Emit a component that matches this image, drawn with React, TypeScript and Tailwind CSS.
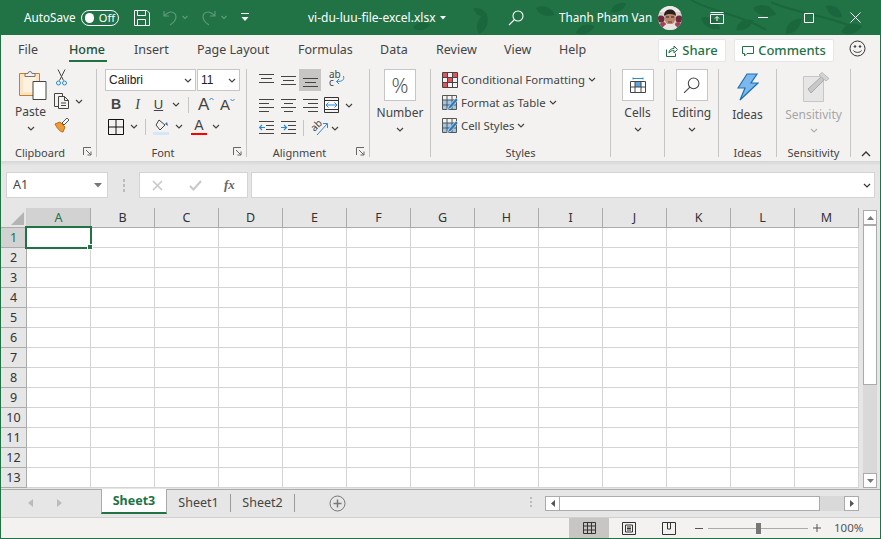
import type { ReactNode } from 'react';

const FONT = "font-['Noto_Sans','Open_Sans',sans-serif]";

const Chev = ({ color = '#444' }: { color?: string }) => (
  <svg width="8" height="5" viewBox="0 0 8 5" fill="none" stroke={color} strokeWidth="1.2">
    <path d="M1 1l3 3 3-3" />
  </svg>
);

const Leaf = ({ x, y, r, s = 1 }: { x: number; y: number; r: number; s?: number }) => (
  <path transform={`translate(${x} ${y}) rotate(${r}) scale(${s})`} d="M0 0C6-7 15-7 22 0 15 6 6 6 0 0z" />
);

const TitleLeaves = () => (
  <svg className="pointer-events-none absolute inset-0" width="881" height="35" fill="#1b673d">
    <Leaf x={412} y={28} r={-10} s={0.8} />
    <Leaf x={478} y={34} r={-70} />
    <Leaf x={486} y={16} r={-150} s={0.7} />
    <Leaf x={535} y={8} r={20} s={0.9} />
    <Leaf x={575} y={33} r={-20} s={0.9} />
    <Leaf x={610} y={12} r={-30} s={0.8} />
    <Leaf x={700} y={18} r={30} s={1} />
    <Leaf x={735} y={30} r={-30} s={0.9} />
    <Leaf x={752} y={8} r={15} s={1.1} />
    <Leaf x={785} y={34} r={-45} s={1} />
    <Leaf x={825} y={6} r={35} s={0.9} />
    <Leaf x={840} y={32} r={-15} s={1} />
    <path d="M690 0c20 12 50 14 75 30M770 2c20 10 50 12 80 24" stroke="#1b673d" strokeWidth="2" fill="none" />
  </svg>
);

const Avatar = () => (
  <svg width="24" height="24" viewBox="0 0 24 24">
    <clipPath id="av"><circle cx="12" cy="12" r="12" /></clipPath>
    <g clipPath="url(#av)">
      <rect width="24" height="24" fill="#d9d2cf" />
      <rect y="0" width="24" height="6" fill="#efeaea" />
      <circle cx="3" cy="13" r="3.5" fill="#6d2a3c" />
      <circle cx="21" cy="13" r="3.5" fill="#6d2a3c" />
      <circle cx="5" cy="19" r="3" fill="#a5405a" />
      <circle cx="20" cy="19" r="3" fill="#a5405a" />
      <ellipse cx="12" cy="12" rx="5.5" ry="6.5" fill="#b98468" />
      <path d="M6 10c0-5 3-6.5 6-6.5s6 1.5 6 6.5c-2-2.500-9-3-12 0z" fill="#2a211f" />
      <path d="M8 11h3M13 11h3" stroke="#2a211f" strokeWidth="1.2" />
      <path d="M10 16h4" stroke="#6b3b32" strokeWidth="1" />
      <path d="M4 24c1-5 4-6 8-6s7 1 8 6z" fill="#e9e4e2" />
    </g>
  </svg>
);

const TitleBar = () => (
  <div className="relative flex h-[35px] shrink-0 items-center bg-[#217346] text-[11.7px] text-white">
    <TitleLeaves />
    <span className="relative ml-[23px] w-[57px]">AutoSave</span>
    <div className="relative flex h-[16px] w-[38px] items-center rounded-full border border-white px-[3px]">
      <span className="h-[10px] w-[10px] rounded-full bg-white" />
      <span className="ml-[5px] text-[11px] leading-none">Off</span>
    </div>
    <svg className="relative ml-[15px]" width="16" height="16" viewBox="0 0 16 16" fill="none" stroke="#fff">
      <path d="M.5.5h12.500l2.500 2.500v12.500H.5zM3.500.5v5h8v-5M3.500 15.500v-6h8v6" />
    </svg>
    <svg className="relative ml-[12px]" width="32" height="16" viewBox="0 0 32 16" fill="none" stroke="#5f9c7d" strokeWidth="1.100">
      <path d="M2 1v5h5M2 6c3-3 5-4 7-4 3 0 5 2 5 5 0 4-3 6-6 8" />
      <path d="M20.500 6l2.500 2.500L25.500 6" />
    </svg>
    <svg className="relative ml-[7px]" width="32" height="16" viewBox="0 0 32 16" fill="none" stroke="#5f9c7d" strokeWidth="1.100">
      <path d="M14 1v5H9M14 6c-3-3-5-4-7-4-3 0-5 2-5 5 0 4 3 6 6 8" />
      <path d="M20.500 6l2.500 2.500L25.500 6" />
    </svg>
    <svg className="relative ml-[7px]" width="10" height="9" viewBox="0 0 10 9" fill="#fff">
      <rect x="1" y="0" width="8" height="1" />
      <path d="M1.500 4h7L5 8z" />
    </svg>
    <span className="relative ml-[58px] w-[132px] text-[12px] whitespace-nowrap">vi-du-luu-file-excel.xlsx</span>
    <svg className="relative ml-[0px]" width="6" height="4" viewBox="0 0 6 4" fill="#fff"><path d="M0 0h6L3 3.500z" /></svg>
    <svg className="relative ml-[62px]" width="16" height="16" viewBox="0 0 16 16" fill="none" stroke="#fff" strokeWidth="1.100">
      <circle cx="10" cy="6" r="5" />
      <path d="M6.500 9.500L1 15" />
    </svg>
    <span className="relative ml-[35px] w-[99px] whitespace-nowrap">Thanh Pham Van</span>
    <div className="relative h-[24px] w-[24px]"><Avatar /></div>
    <svg className="relative ml-[28px]" width="14" height="12" viewBox="0 0 14 12" fill="none" stroke="#fff">
      <path d="M.5 2.500h13v9H.5zM.5 .5h13M7 9V5M5 6.500L7 4.500l2 2" />
    </svg>
    <svg className="relative ml-[34px]" width="10" height="2" viewBox="0 0 10 2"><rect width="10" height="1" y="0" fill="#fff" /></svg>
    <svg className="relative ml-[36px]" width="10" height="10" viewBox="0 0 10 10" fill="none" stroke="#fff"><path d="M.5.500h9v9h-9z" /></svg>
    <svg className="relative ml-[36px]" width="11" height="11" viewBox="0 0 11 11" fill="none" stroke="#fff"><path d="M.5.500l10 10M10.500.500l-10 10" /></svg>
  </div>
);

const tabs = [
  { label: 'File', cls: 'w-[51px]' },
  { label: 'Home', cls: 'w-[65px]' },
  { label: 'Insert', cls: 'w-[63px]' },
  { label: 'Page Layout', cls: 'w-[101px]' },
  { label: 'Formulas', cls: 'w-[82px]' },
  { label: 'Data', cls: 'w-[56px]' },
  { label: 'Review', cls: 'w-[68px]' },
  { label: 'View', cls: 'w-[55px]' },
  { label: 'Help', cls: 'w-[55px]' },
];

const TabRow = () => (
  <div className="flex h-[30px] shrink-0 items-start pl-[17px] text-[12.5px] text-[#444]">
    {tabs.map((t) => (
      <div key={t.label} className={`${t.cls} relative h-[28px] pt-[6px] whitespace-nowrap`}>
        {t.label === 'Home' ? (
          <>
            <span className="font-medium text-[#1f4f35]">{t.label}</span>
            <div className="absolute top-[25px] left-0 h-[2px] w-[38px] bg-[#217346]" />
          </>
        ) : (
          t.label
        )}
      </div>
    ))}
    <div className="ml-[44px] mt-[4px] flex h-[23px] w-[68px] items-center justify-center gap-[4px] rounded-[2px] border border-[#e6e6e6] bg-white text-[13px] font-medium text-[#217346]">
      <svg width="12" height="12" viewBox="0 0 12 12" fill="none" stroke="#217346">
        <path d="M.5 4.500v7h9v-3M3 8c0-3 2-4.500 5-4.500V1l3.500 3.500L8 8V5.500C6 5.500 4 6 3 8z" />
      </svg>
      Share
    </div>
    <div className="ml-[8px] mt-[4px] flex h-[23px] w-[100px] items-center justify-center gap-[4px] rounded-[2px] border border-[#e6e6e6] bg-white text-[13px] font-medium text-[#217346]">
      <svg width="12" height="12" viewBox="0 0 12 12" fill="none" stroke="#217346">
        <path d="M.5 1.500h11v7H5L2.500 11V8.500h-2z" />
      </svg>
      Comments
    </div>
    <svg className="ml-[15px] mt-[5px]" width="17" height="17" viewBox="0 0 17 17" fill="none" stroke="#333">
      <circle cx="8.500" cy="8.500" r="7.500" />
      <circle cx="6" cy="6.500" r=".8" fill="#333" />
      <circle cx="11" cy="6.500" r=".8" fill="#333" />
      <path d="M4.500 10.500c1.500 2.500 6.500 2.500 8 0" />
    </svg>
  </div>
);

const Group = ({ label, cls, launcher, children }: { label: string; cls: string; launcher?: boolean; children: ReactNode }) => (
  <div className={`${cls} relative mt-[4px] flex h-[88px] shrink-0 flex-col border-r border-[#c6c6c6]`}>
    <div className="relative h-[76px] flex-none">{children}</div>
    <div className={launcher ? 'pr-[17px] text-center text-[11px] leading-[16px] text-[#444]' : 'text-center text-[11px] leading-[16px] text-[#444]'}>{label}</div>
    {launcher && (
      <svg className="absolute right-[4px] bottom-[1px]" width="9" height="9" viewBox="0 0 9 9" fill="none" stroke="#666">
        <path d="M.5 8V.5H8M3 3l5 5M8 4.500V8H4.500" />
      </svg>
    )}
  </div>
);

// big ribbon button with a white box: Number, Cells, Editing
const BoxButton = ({ label, children }: { label: string; children: ReactNode }) => (
  <div className="flex flex-col items-center text-[12px] leading-[16px] text-[#444]">
    <div className="flex h-[32px] w-[32px] items-center justify-center border border-[#c6c6c6] bg-white">{children}</div>
    <span className="mt-[4px]">{label}</span>
    <div className="mt-[6px]"><Chev /></div>
  </div>
);

const Lines = ({ rows }: { rows: [number, number, number][] }) => (
  <svg width="15" height="14" viewBox="0 0 15 14" stroke="#444">
    {rows.map(([x1, x2, y]) => (
      <line key={y} x1={x1} x2={x2} y1={y + 0.5} y2={y + 0.5} />
    ))}
  </svg>
);

const Cell = ({ children, cls = '' }: { children: ReactNode; cls?: string }) => (
  <div className={`${cls} flex h-[22px] w-[22px] items-center justify-center`}>{children}</div>
);

const VSep = ({ cls }: { cls: string }) => <div className={`${cls} h-[16px] w-px bg-[#c6c6c6]`} />;

const Clipboard = () => (
  <Group label="Clipboard" cls="w-[96px]" launcher>
    <div className="flex">
      <div className="ml-[13px] flex w-[35px] flex-col items-center text-[12px] leading-[16px] text-[#444]">
        <svg width="28" height="32" viewBox="0 0 28 32" className="mt-[0px] ml-[2px]">
          <path d="M.5 4.500h20v22H.5z" fill="#fbe5c6" stroke="#d27d1d" />
          <path d="M4 8h13v15H4z" fill="#fdf1df" stroke="none" />
          <path d="M6 4.500h3a2 2 0 014 0h3v3H6z" fill="#f3f2f1" stroke="#777" />
          <path d="M14 12.500h13v18H14z" fill="#fff" stroke="#444" />
        </svg>
        <span className="mt-[3px] mr-[2px]">Paste</span>
        <div className="mt-[6px] mr-[2px]"><Chev /></div>
      </div>
      <div className="ml-[5px] flex flex-col items-start">
        <svg className="ml-[2px]" width="11" height="17" viewBox="0 0 11 17" fill="none" stroke="#444">
          <path d="M2 .5l5.500 11M9 .5L3.500 11.500" />
          <circle cx="2.500" cy="14" r="2" stroke="#2b88d8" />
          <circle cx="8.500" cy="14" r="2" stroke="#2b88d8" />
        </svg>
        <div className="mt-[7px] flex items-center gap-[5px]">
          <svg width="16" height="16" viewBox="0 0 16 16" fill="none" stroke="#444">
            <path d="M4.500 13.500H.5V.5h8v3M4.500 3.500h6l4 4v8h-10zM10.500 3.500v4h4M7 10h5M7 12.500h5" />
          </svg>
          <Chev />
        </div>
        <svg className="mt-[8px]" width="16" height="16" viewBox="0 0 16 16">
          <path d="M1 7l5-2 5 5-2 5c-3 0-6-4-8-8z" fill="#ed9a3a" stroke="#c46a10" />
          <path d="M8 6l5-5 2 2-5 5z" fill="#fff" stroke="#555" />
        </svg>
      </div>
    </div>
  </Group>
);

const Font = () => (
  <Group label="Font" cls="w-[150px]" launcher>
    <div className="ml-[8px] flex text-[12px] text-[#222]">
      <div className="flex h-[22px] w-[91px] items-center justify-between border border-[#c6c6c6] bg-white pr-[3px] pl-[3px] font-['Liberation_Sans',sans-serif]">
        Calibri <Chev />
      </div>
      <div className="ml-px flex h-[22px] w-[43px] items-center justify-between border border-[#c6c6c6] bg-white pr-[3px] pl-[3px] font-['Liberation_Sans',sans-serif]">
        11 <Chev />
      </div>
    </div>
    <div className="mt-[5px] ml-[8px] flex h-[17px] items-center text-[#444]">
      <span className="w-[22px] text-center font-['Liberation_Sans',sans-serif] text-[14px] font-bold">B</span>
      <span className="w-[21px] text-center font-['Liberation_Serif',serif] text-[14px] italic">I</span>
      <span className="w-[21px] text-center font-['Liberation_Sans',sans-serif] text-[13px] underline">U</span>
      <div className="ml-[3px] w-[13px]"><Chev /></div>
      <VSep cls="ml-[3px]" />
      <div className="ml-[9px] flex w-[22px] items-start font-['Liberation_Sans',sans-serif] text-[17px] leading-none">
        A
        <svg className="mt-[1px]" width="5" height="4" viewBox="0 0 5 4" fill="none" stroke="#2b88d8"><path d="M.5 3l2-2 2 2" /></svg>
      </div>
      <div className="flex w-[20px] items-start font-['Liberation_Sans',sans-serif] text-[15px] leading-none">
        A
        <svg className="mt-[1px]" width="5" height="4" viewBox="0 0 5 4" fill="none" stroke="#2b88d8"><path d="M.5 1l2 2 2-2" /></svg>
      </div>
    </div>
    <div className="mt-[5px] ml-[11px] flex h-[17px] items-center">
      <svg width="16" height="16" viewBox="0 0 16 16" fill="none" stroke="#111"><path d="M.5.500h15v15H.5zM8 .5v15M.5 8h15" /></svg>
      <div className="ml-[6px] w-[12px]"><Chev /></div>
      <VSep cls="ml-[3px]" />
      <svg className="ml-[7px]" width="17" height="16" viewBox="0 0 17 16">
        <path d="M6 1l6 5-5 5-4-5z" fill="none" stroke="#444" />
        <path d="M12 5l2-2 1 4z" fill="#2b6cb0" />
        <rect y="13" width="16" height="3" fill="#d5e6f5" />
      </svg>
      <div className="ml-[5px] w-[12px]"><Chev /></div>
      <div className="ml-[4px] flex h-[16px] w-[16px] flex-col items-center justify-end">
        <span className="font-['Liberation_Sans',sans-serif] text-[14px] leading-[13px] text-[#444]">A</span>
        <div className="mt-px h-[3px] w-full bg-[#f00]" />
      </div>
      <div className="ml-[5px] w-[12px]"><Chev /></div>
    </div>
  </Group>
);

const Alignment = () => (
  <Group label="Alignment" cls="w-[123px]" launcher>
    <div className="ml-[8px] flex flex-col">
      <div className="flex">
        <Cell><Lines rows={[[0, 15, 1], [2, 13, 5], [0, 15, 9]]} /></Cell>
        <Cell><Lines rows={[[0, 15, 3], [2, 13, 7], [0, 15, 11]]} /></Cell>
        <Cell cls="bg-[#c8c6c4]"><Lines rows={[[0, 15, 5], [2, 13, 9], [0, 15, 13]]} /></Cell>
        <div className="relative flex h-[22px] w-[30px] items-start pt-[1px] pl-[8px] text-[10px] leading-[8px] text-[#444]">
          <span className="w-[14px]">ab c</span>
          <svg className="absolute top-[7px] left-[13px]" width="11" height="11" viewBox="0 0 11 11" fill="none" stroke="#2b88d8">
            <path d="M9.500 0c1 4-1 5.500-7 5.500M5 3L2.500 5.500 5 8" />
          </svg>
        </div>
      </div>
      <div className="mt-[3px] flex h-[22px] items-center">
        <Cell><Lines rows={[[0, 15, 1], [0, 10, 5], [0, 15, 9], [0, 10, 13]]} /></Cell>
        <Cell><Lines rows={[[0, 15, 1], [3, 12, 5], [0, 15, 9], [3, 12, 13]]} /></Cell>
        <Cell><Lines rows={[[0, 15, 1], [5, 15, 5], [0, 15, 9], [5, 15, 13]]} /></Cell>
        <svg className="ml-[3px]" width="15" height="16" viewBox="0 0 15 16" fill="none">
          <path d="M.5.500h14v15H.5zM.5 3.500h14M.5 12.500h14" stroke="#333" />
          <rect x="1" y="4" width="13" height="8" fill="#fff" />
          <path d="M2 8h11M4.500 5.500L2 8l2.500 2.500M10.500 5.500L13 8l-2.500 2.500" stroke="#2b88d8" />
        </svg>
        <div className="ml-[6px]"><Chev /></div>
      </div>
      <div className="mt-[1px] flex h-[22px] items-center">
        <Cell><svg width="15" height="14" viewBox="0 0 15 14" fill="none"><path d="M0 .5h15M7 4.500h8M7 8.500h8M0 12.500h15" stroke="#444" /><path d="M6 6.500H.5M3 4l-2.500 2.500L3 9" stroke="#2b88d8" strokeWidth="1.200" /></svg></Cell>
        <Cell><svg width="15" height="14" viewBox="0 0 15 14" fill="none"><path d="M0 .5h15M7 4.500h8M7 8.500h8M0 12.500h15" stroke="#444" /><path d="M0 6.500h5.500M3 4l2.500 2.500L3 9" stroke="#2b88d8" strokeWidth="1.200" /></svg></Cell>
        <VSep cls="ml-[4px]" />
        <div className="relative ml-[7px] h-[16px] w-[17px]">
          <span className="absolute top-[-1px] left-[-1px] -rotate-45 text-[10px] leading-[12px] text-[#444]">ab</span>
          <svg className="absolute inset-0" width="17" height="16" viewBox="0 0 17 16" fill="none">
            <path d="M6 15L16 4M12 3.500h4.500V8" stroke="#2b88d8" />
          </svg>
        </div>
        <div className="ml-[3px]"><Chev /></div>
      </div>
    </div>
  </Group>
);

const StyleRow = ({ label, icon }: { label: string; icon: ReactNode }) => (
  <div className="flex h-[23px] items-center gap-[3px] whitespace-nowrap text-[11.400px] text-[#444]">
    {icon}
    <span>{label}</span>
    <Chev />
  </div>
);

const tableIcon = (
  <svg width="16" height="16" viewBox="0 0 16 16" fill="none">
    <path d="M1 1h14v3H1z" fill="#f3f2f1" />
    <path d="M1 5h13v9H1z" fill="#9cc8ee" />
    <path d="M.5.500h14v14H.5zM.5 5h14M5 .5v14M10 .5v14M.5 10h14" stroke="#555" />
    <path d="M5 15l2-4 7-8 2 2-7 8z" fill="#2f78b8" stroke="#fff" strokeWidth=".5" />
  </svg>
);

const Styles = () => (
  <Group label="Styles" cls="w-[180px]">
    <div className="ml-[11px] mt-[-1px] flex flex-col">
      <StyleRow
        label="Conditional Formatting"
        icon={
          <svg width="16" height="16" viewBox="0 0 16 16" fill="none">
            <path d="M1 1h5v5H1zM10 1h5v5h-5zM1 10h5v5H1zM6 6h4v4H6z" fill="#e8505b" />
            <path d="M.5.500h15v15H.5zM5.500.500v15M10.500.500v15M.5 5.500h15M.5 10.500h15" stroke="#444" />
          </svg>
        }
      />
      <StyleRow label="Format as Table" icon={tableIcon} />
      <StyleRow label="Cell Styles" icon={tableIcon} />
    </div>
  </Group>
);

const Ribbon = () => (
  <div className={`flex h-[96px] shrink-0`}>
    <Clipboard />
    <Font />
    <Alignment />
    <Group label="" cls="w-[61px]">
      <div className="flex justify-center">
        <BoxButton label="Number"><span className="font-['Open_Sans',sans-serif] text-[21px] leading-none font-light text-[#444]">%</span></BoxButton>
      </div>
    </Group>
    <Styles />
    <Group label="" cls="w-[54px]">
      <div className="flex justify-center">
        <BoxButton label="Cells">
          <svg width="16" height="16" viewBox="0 0 16 16" fill="none">
            <rect x="5" y="5" width="6" height="5" fill="#5ba4e0" />
            <path d="M.5 4.500h15v11H.5zM.5 10h15M5 4.500v11M11 4.500v11" stroke="#444" />
            <path d="M3 1.500h10M3 .5v2M13 .5v2" stroke="#2b88d8" />
          </svg>
        </BoxButton>
      </div>
    </Group>
    <Group label="" cls="w-[54px]">
      <div className="flex justify-center">
        <BoxButton label="Editing">
          <svg width="17" height="17" viewBox="0 0 16 16" fill="none" stroke="#444">
            <circle cx="10" cy="6" r="5" />
            <path d="M6.500 9.500L1 15" />
          </svg>
        </BoxButton>
      </div>
    </Group>
    <Group label="Ideas" cls="w-[58px]">
      <div className="flex flex-col items-center pt-[4px] text-[12px] leading-[16px] text-[#444]">
        <svg width="22" height="28" viewBox="0 0 22 28">
          <path d="M10 1h10l-6 9h7L3 27l5-12H1z" fill="#7cb8ec" stroke="#1f6fb5" strokeWidth="1.200" />
        </svg>
        <span className="mt-[6px]">Ideas</span>
      </div>
    </Group>
    <Group label="Sensitivity" cls="w-[74px]">
      <div className="flex flex-col items-center pt-[3px] text-[12px] leading-[16px] text-[#a6a6a6]">
        <svg className="ml-[6px]" width="27" height="30" viewBox="0 0 27 30" fill="none">
          <path d="M.5 4.500h20v25H.5z" fill="#e6e6e6" stroke="#c6c6c6" />
          <path d="M5 17L18 5l3 3L8 21z" fill="#c8c8c8" stroke="#aaa" />
          <path d="M16 3l3-2.500 7 6L23 9z" fill="#d4d4d4" stroke="#bbb" />
        </svg>
        <span className="mt-[5px]">Sensitivity</span>
        <div className="mt-[5px]"><Chev color="#b0b0b0" /></div>
      </div>
    </Group>
    <svg className="ml-[10px] mt-[85px] shrink-0" width="10" height="7" viewBox="0 0 10 7" fill="none" stroke="#333" strokeWidth="1.300">
      <path d="M1 6l4-4 4 4" />
    </svg>
  </div>
);

const FormulaBar = () => (
  <div className="flex h-[47px] shrink-0 items-start bg-[#e6e6e6] bg-gradient-to-b from-[#d6d6d6] from-0% to-[#e6e6e6] to-10% pt-[11px] pl-[5px]">
    <div className="flex h-[26px] w-[102px] items-center justify-between border border-[#d4d4d4] bg-white pr-[5px] pl-[6px] text-[12.500px] text-[#444]">
      A1
      <svg width="8" height="5" viewBox="0 0 8 5" fill="#777"><path d="M0 0h8L4 4.500z" /></svg>
    </div>
    <div className="ml-[15px] mt-[7px] flex flex-col gap-[2px]">
      <div className="h-[3px] w-[2px] bg-[#bbb]" />
      <div className="h-[3px] w-[2px] bg-[#bbb]" />
      <div className="h-[3px] w-[2px] bg-[#bbb]" />
    </div>
    <div className="ml-[14px] flex h-[26px] w-[109px] items-center border border-[#d4d4d4] bg-white text-[#666]">
      <svg className="ml-[12px]" width="11" height="11" viewBox="0 0 11 11" fill="none" stroke="#c8c8c8" strokeWidth="1.600"><path d="M1 1l9 9M10 1l-9 9" /></svg>
      <svg className="ml-[26px]" width="13" height="11" viewBox="0 0 13 11" fill="none" stroke="#c8c8c8" strokeWidth="2"><path d="M1 6l3.500 3.500L12 1" /></svg>
      <span className="ml-[22px] font-['Liberation_Serif',serif] text-[13px] font-bold italic">fx</span>
    </div>
    <div className="ml-[3px] flex h-[26px] w-[624px] items-center justify-end border border-[#d4d4d4] bg-white pr-[3px]">
      <Chev color="#333" />
    </div>
  </div>
);

const cols = ['A', 'B', 'C', 'D', 'E', 'F', 'G', 'H', 'I', 'J', 'K', 'L', 'M'];
const rows = [1, 2, 3, 4, 5, 6, 7, 8, 9, 10, 11, 12, 13];

const Sheet = () => (
  <div className="flex h-[281px] shrink-0 bg-[#e6e6e6]">
    <div className="flex w-[858px] shrink-0 flex-col">
      <div className="flex h-[20px] shrink-0 border-b border-[#ababab]">
        <div className="flex w-[26px] items-end justify-end border-r border-[#d0d0d0] pr-[2px] pb-[2px]">
          <svg width="13" height="13" viewBox="0 0 13 13"><path d="M13 0v13H0z" fill="#b4b4b4" /></svg>
        </div>
        {cols.map((c) => (
          <div
            key={c}
            className={
              c === 'A'
                ? 'flex w-[64px] items-center justify-center border-r border-[#ababab] bg-[#d2d2d2] pt-[2px] text-[12.500px] text-[#217346]'
                : 'flex w-[64px] items-center justify-center border-r border-[#ababab] pt-[2px] text-[12.500px] text-[#333]'
            }
          >
            {c}
          </div>
        ))}
      </div>
      {rows.map((r) => (
        <div key={r} className="flex h-[20px] shrink-0">
          <div
            className={
              r === 1
                ? 'flex w-[26px] items-center justify-center border-r border-b border-[#ababab] bg-[#d2d2d2] pt-[2px] text-[12.500px] text-[#217346]'
                : 'flex w-[26px] items-center justify-center border-r border-b border-[#ababab] pt-[2px] text-[12.500px] text-[#333]'
            }
          >
            {r}
          </div>
          {cols.map((c) => (
            <div key={c} className="relative w-[64px] border-r border-b border-[#d4d4d4] bg-white">
              {r === 1 && c === 'A' && (
                <>
                  <div className="absolute top-[-2px] left-[-2px] z-10 h-[23px] w-[67px] border-2 border-[#217346]" />
                  <div className="absolute right-[-3px] bottom-[-3px] z-20 h-[6px] w-[6px] border border-white bg-[#217346]" />
                </>
              )}
            </div>
          ))}
        </div>
      ))}
    </div>
    {/* vertical scroll bar */}
    <div className="ml-[3px] mt-[2px] flex h-[278px] w-[15px] flex-col border-l border-[#e6e6e6] bg-[#d9d9d9]">
      <div className="flex h-[15px] shrink-0 items-center justify-center border border-[#ababab] bg-white">
        <svg width="7" height="4" viewBox="0 0 7 4" fill="#777"><path d="M0 4h7L3.500 0z" /></svg>
      </div>
      <div className="h-[160px] shrink-0 border border-[#ababab] bg-white" />
      <div className="flex-1" />
      <div className="flex h-[15px] shrink-0 items-center justify-center border border-[#ababab] bg-white">
        <svg width="7" height="4" viewBox="0 0 7 4" fill="#777"><path d="M0 0h7L3.500 4z" /></svg>
      </div>
    </div>
  </div>
);

const SheetTabs = () => (
  <div className="flex h-[28px] shrink-0 items-start border-t border-[#ababab] bg-[#e6e6e6] text-[12.500px] text-[#444]">
    <svg className="ml-[27px] mt-[9px]" width="5" height="8" viewBox="0 0 5 8" fill="#bbb"><path d="M5 0v8L0 4z" /></svg>
    <svg className="ml-[24px] mt-[9px]" width="5" height="8" viewBox="0 0 5 8" fill="#bbb"><path d="M0 0v8l5-4z" /></svg>
    <div className="ml-[39px] mt-[-1px] flex h-[25px] w-[66px] items-center justify-center border-x border-[#ababab] border-b-2 border-b-[#217346] bg-white pt-[1px] font-bold text-[#217346]">
      Sheet3
    </div>
    <div className="mt-[4px] flex h-[18px] w-[64px] items-center justify-center border-r border-[#999]">Sheet1</div>
    <div className="mt-[4px] flex h-[18px] w-[64px] items-center justify-center border-r border-[#999]">Sheet2</div>
    <svg className="ml-[34px] mt-[5px]" width="17" height="17" viewBox="0 0 17 17" fill="none" stroke="#777">
      <circle cx="8.500" cy="8.500" r="7.500" />
      <path d="M8.500 4.500v8M4.500 8.500h8" strokeWidth="1.500" />
    </svg>
    <div className="ml-[184px] mt-[7px] flex flex-col gap-[2px]">
      <div className="h-[2px] w-[2px] bg-[#bbb]" />
      <div className="h-[2px] w-[2px] bg-[#bbb]" />
      <div className="h-[2px] w-[2px] bg-[#bbb]" />
    </div>
    {/* horizontal scroll bar */}
    <div className="ml-[13px] mt-[6px] flex h-[15px] w-[314px] bg-[#d9d9d9]">
      <div className="flex w-[15px] items-center justify-center border border-[#ababab] bg-white">
        <svg width="4" height="7" viewBox="0 0 4 7" fill="#555"><path d="M4 0v7L0 3.500z" /></svg>
      </div>
      <div className="w-[260px] border-y border-r border-[#ababab] bg-white" />
      <div className="flex-1" />
      <div className="flex w-[15px] items-center justify-center border border-[#ababab] bg-white">
        <svg width="4" height="7" viewBox="0 0 4 7" fill="#555"><path d="M0 0v7l4-3.500z" /></svg>
      </div>
    </div>
  </div>
);

const StatusBar = () => (
  <div className="flex flex-1 items-stretch border-t border-[#d0d0d0] bg-[#f3f2f1] pl-[568px] text-[11.500px] text-[#555]">
    <div className="flex w-[40px] items-center justify-center bg-[#c8c6c4]">
      <svg width="13" height="12" viewBox="0 0 13 12" fill="none" stroke="#333">
        <path d="M.5.500h12v11H.5zM4.500.500v11M8.500.500v11M.5 4h12M.5 8h12" />
      </svg>
    </div>
    <div className="flex w-[40px] items-center justify-center">
      <svg width="14" height="13" viewBox="0 0 14 13" fill="none" stroke="#333">
        <path d="M.5.500h13v12H.5zM3.500 3h7v7h-7zM5 5h4M5 6.500h4M5 8h4" />
      </svg>
    </div>
    <div className="flex w-[40px] items-center justify-center">
      <svg width="14" height="13" viewBox="0 0 14 13" fill="none" stroke="#333">
        <path d="M.5.500h13v12H.5zM5.500.500V7h3V.500" />
      </svg>
    </div>
    <div className="ml-[6px] flex items-center">
      <div className="h-px w-[8px] bg-[#555]" />
      <div className="relative ml-[5px] h-px w-[100px] bg-[#aaa]">
        <div className="absolute top-[-5px] left-[48px] h-[11px] w-[5px] bg-[#777]" />
      </div>
      <svg className="ml-[5px]" width="8" height="8" viewBox="0 0 8 8" stroke="#555"><path d="M0 4h8M4 0v8" /></svg>
      <span className="ml-[13px]">100%</span>
    </div>
  </div>
);

export default function App() {
  return (
    <div className={`${FONT} flex h-[539px] w-[881px] flex-col overflow-hidden border-x border-b border-[#217346] bg-[#f3f2f1]`}>
      <TitleBar />
      <TabRow />
      <Ribbon />
      <FormulaBar />
      <Sheet />
      <SheetTabs />
      <StatusBar />
    </div>
  );
}
